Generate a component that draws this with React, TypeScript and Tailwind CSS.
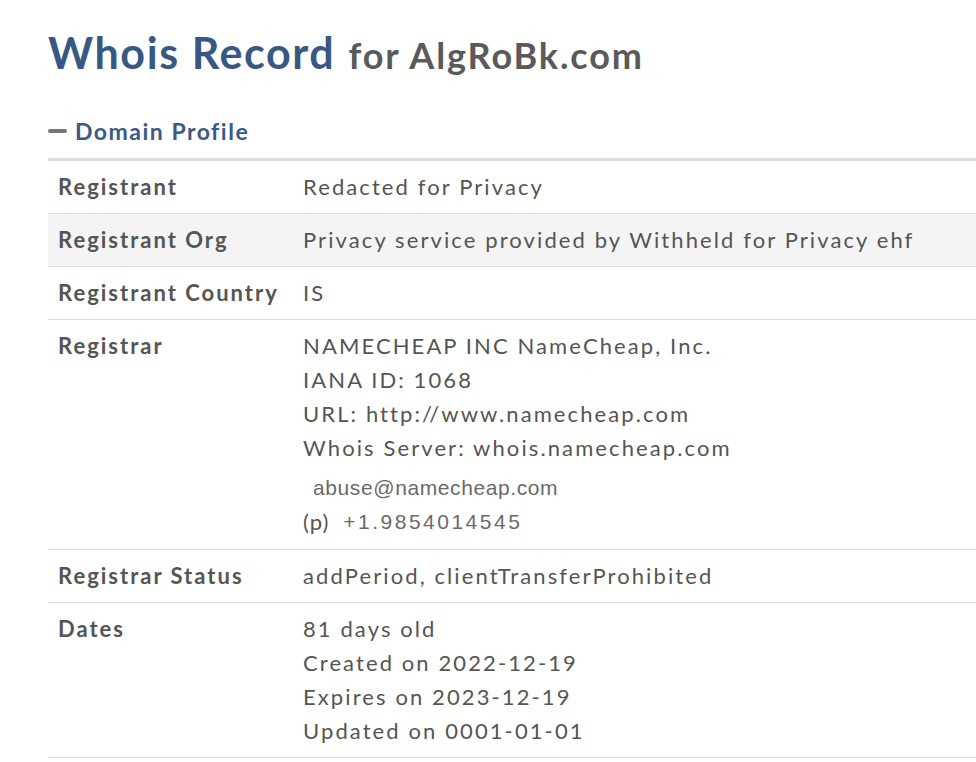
export default function App() {
  const rows: { label: string; lines: string[]; shaded?: boolean; registrar?: boolean }[] = [
    { label: "Registrant", lines: ["Redacted for Privacy"] },
    { label: "Registrant Org", lines: ["Privacy service provided by Withheld for Privacy ehf"], shaded: true },
    { label: "Registrant Country", lines: ["IS"] },
    {
      label: "Registrar",
      lines: [
        "NAMECHEAP INC NameCheap, Inc.",
        "IANA ID: 1068",
        "URL: http://www.namecheap.com",
        "Whois Server: whois.namecheap.com",
      ],
      registrar: true,
    },
    { label: "Registrar Status", lines: ["addPeriod, clientTransferProhibited"] },
    {
      label: "Dates",
      lines: ["81 days old", "Created on 2022-12-19", "Expires on 2023-12-19", "Updated on 0001-01-01"],
    },
  ];

  return (
    <div className="min-h-[762px] w-[976px] overflow-hidden bg-white font-['Lato','Noto_Sans',sans-serif] text-[#555]">
      {/* Heading */}
      <h1 className="pl-[48px] pt-[27px] leading-[52px]">
        <span className="text-[43px] font-bold tracking-[1.6px] text-[#385884]">Whois Record</span>
        <span className="ml-[13px] text-[36px] font-bold tracking-[1.9px] text-[#5a5a5a]">for AlgRoBk.com</span>
      </h1>

      {/* Section */}
      <div className="mt-[28px] pl-[48px]">
        <div className="flex items-center gap-[8px]">
          <span className="block h-[4px] w-[19px] rounded-full bg-[#777]" />
          <span className="text-[23px] font-bold leading-[28px] tracking-[1.5px] text-[#3b5a87]">
            Domain Profile
          </span>
        </div>

        <div className="mt-[13px] border-t-[3px] border-[#dcdcdc]">
          {rows.map((r) => (
            <div
              key={r.label}
              className={`flex border-b border-[#dedede] py-[9px] text-[22px] leading-[34px] tracking-[2.1px] ${
                r.shaded ? "bg-[#f4f4f4]" : ""
              }`}
            >
              <div className="w-[255px] shrink-0 pl-[10px] font-bold tracking-[2px]">{r.label}</div>
              <div className="flex flex-col">
                {r.lines.map((l) => (
                  <span key={l}>{l}</span>
                ))}
                {r.registrar && (
                  <>
                    <span className="mt-[6px] pl-[10px] font-['Liberation_Sans',sans-serif] text-[21px] tracking-[0.6px] text-[#6a6a6a]">
                      abuse@namecheap.com
                    </span>
                    <span className="mb-[1px] flex items-center">
                      <span className="text-[22px] tracking-[1px]">(p)</span>
                      <span className="ml-[14px] font-['Liberation_Sans',sans-serif] text-[21px] tracking-[2.5px] text-[#6a6a6a]">
                        +1.9854014545
                      </span>
                    </span>
                  </>
                )}
              </div>
            </div>
          ))}
        </div>
      </div>
    </div>
  );
}
